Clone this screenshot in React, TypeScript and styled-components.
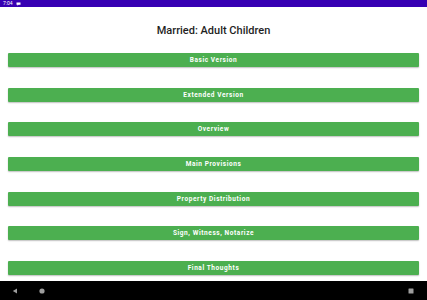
import React from "react";
import styled, { createGlobalStyle } from "styled-components";

const Global = createGlobalStyle`
  html, body { margin: 0; padding: 0; background: #ffffff; }
  body { font-family: Roboto, "Noto Sans", sans-serif; }
  #root { width: 427px; height: 300px; }
`;

const Screen = styled.div`
  width: 427px;
  height: 300px;
  display: flex;
  flex-direction: column;
  overflow: hidden;
  background: #ffffff;
`;

const StatusBar = styled.div`
  height: 7px;
  background: #3700b3;
  display: flex;
  align-items: center;
  gap: 3px;
  padding-left: 3px;
  color: #ffffff;
  font-size: 5px;
  font-family: Roboto, sans-serif;
  line-height: 7px;
`;

const Content = styled.div`
  flex: 1;
  display: flex;
  flex-direction: column;
  padding: 0 8px;
`;

const Title = styled.h1`
  margin: 0;
  height: 46px;
  display: flex;
  align-items: center;
  justify-content: center;
  font-size: 11px;
  font-weight: 500;
  color: #1f1f1f;
  padding-top: 1px;
  box-sizing: border-box;
`;

const List = styled.div`
  display: flex;
  flex-direction: column;
  gap: 20.67px;
`;

const Button = styled.button`
  height: 14px;
  width: 100%;
  border: none;
  border-radius: 1px;
  background: #4caf50;
  color: #ffffff;
  font-family: Roboto, sans-serif;
  font-weight: 700;
  font-size: 6.5px;
  letter-spacing: 0.09em;
  padding: 0;
  box-shadow: 0 1px 1.5px rgba(0, 0, 0, 0.25);
  display: flex;
  align-items: center;
  justify-content: center;
`;

const NavBar = styled.div`
  height: 19px;
  background: #000000;
  display: flex;
  align-items: center;
  padding: 0 13px 0 12px;
`;

const NavLeft = styled.div`
  display: flex;
  align-items: center;
  gap: 21px;
  flex: 1;
`;

const items = [
  "Basic Version",
  "Extended Version",
  "Overview",
  "Main Provisions",
  "Property Distribution",
  "Sign, Witness, Notarize",
  "Final Thoughts",
];

export default function App() {
  return (
    <>
      <Global />
      <Screen>
        <StatusBar>
          <span>7:04</span>
          <svg width="5" height="4" viewBox="0 0 5 4">
            <path d="M0.5 0.5h4v2.2h-2l-1 1v-1h-1z" fill="#fff" />
          </svg>
        </StatusBar>
        <Content>
          <Title>Married: Adult Children</Title>
          <List>
            {items.map((t) => (
              <Button key={t}>{t}</Button>
            ))}
          </List>
        </Content>
        <NavBar>
          <NavLeft>
            <svg width="6" height="6" viewBox="0 0 6 6">
              <path d="M5 0.5v5L0.8 3z" fill="#9e9e9e" />
            </svg>
            <svg width="6" height="6" viewBox="0 0 6 6">
              <circle cx="3" cy="3" r="2.6" fill="#9e9e9e" />
            </svg>
          </NavLeft>
          <svg width="6" height="6" viewBox="0 0 6 6">
            <rect x="0.5" y="0.5" width="5" height="5" rx="0.5" fill="#9e9e9e" />
          </svg>
        </NavBar>
      </Screen>
    </>
  );
}
